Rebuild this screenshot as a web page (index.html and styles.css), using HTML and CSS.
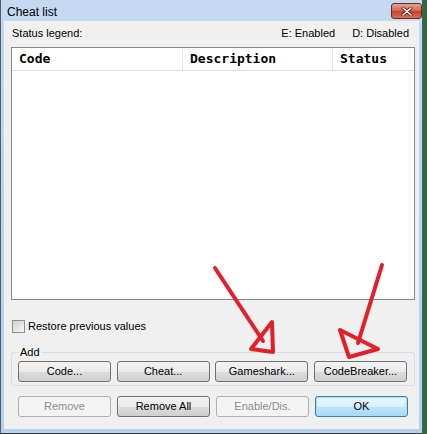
FILE: index.html
```html
<html>
	<head>
		<link rel="stylesheet" href="styles.css">
	</head>
	<body>
		<div id="window">
			<div id="titlebar">
				<span id="title">Cheat list</span>
				<div id="btnClose">
					<svg width="14" height="9" viewBox="0 0 14 9">
						<path d="M3 1 L11 8 M11 1 L3 8" stroke="#5a1a10" stroke-width="3" stroke-linecap="round"/>
						<path d="M3 1 L11 8 M11 1 L3 8" stroke="#ffffff" stroke-width="1.6" stroke-linecap="round"/>
					</svg>
				</div>
			</div>
			<div id="client">
				<div id="legend">
					<span>Status legend:</span>
					<span class="legendRight"><span>E: Enabled</span><span>D: Disabled</span></span>
				</div>
				<div id="cheatList">
					<div class="listHead">
						<div class="col colCode">Code</div>
						<div class="col colDesc">Description</div>
						<div class="col colStatus">Status</div>
					</div>
				</div>
				<div id="restoreRow">
					<span class="checkbox"></span>
					<span>Restore previous values</span>
				</div>
				<fieldset id="addGroup">
					<legend>Add</legend>
					<div class="btnRow">
						<div class="btn">Code...</div>
						<div class="btn">Cheat...</div>
						<div class="btn">Gameshark...</div>
						<div class="btn">CodeBreaker...</div>
					</div>
				</fieldset>
				<div class="btnRow bottomRow">
					<div class="btn disabled">Remove</div>
					<div class="btn">Remove All</div>
					<div class="btn disabled">Enable/Dis.</div>
					<div class="btn default">OK</div>
				</div>
			</div>
		</div>
		<svg id="arrows" width="427" height="434" viewBox="0 0 427 434">
			<g fill="none" stroke="#e41e2a" stroke-width="4" stroke-linecap="round" stroke-linejoin="round">
				<path d="M215 268 L263 341"/>
				<path d="M272 322 L251 349 L273 352 Z"/>
				<path d="M382 265 L358 343"/>
				<path d="M340 330 L349 357 L378 349 Z"/>
			</g>
		</svg>
	</body>
</html>
```

FILE: styles.css
```css
body{
	margin:0;
	background:#2c6a3a;
	font-family:"Liberation Sans", Arial, sans-serif;
	font-size:11px;
	color:#000;
	position:relative;
	width:427px;
	height:434px;
	overflow:hidden;
}

#window{
	width:423px;
	height:434px;
	box-sizing:border-box;
	display:flex;
	flex-direction:column;
	background:linear-gradient(#c3daf1, #b7cfe9);
	border-left:1px solid #4d5d6e;
	border-right:1px solid #4d5d6e;
	border-bottom:1px solid #333d48;
}

#titlebar{
	height:21px;
	display:flex;
	align-items:center;
	justify-content:space-between;
	padding-left:6px;
}

#title{
	font-size:12px;
	line-height:14px;
	margin-top:2px;
}

#btnClose{
	width:29px;
	height:14px;
	margin-top:1px;
	border:1px solid #6b2b22;
	border-radius:3px;
	background:linear-gradient(#e8a493, #d7644c 50%, #c6402a 51%, #d77059);
	display:flex;
	align-items:center;
	justify-content:center;
}

#client{
	flex:1;
	margin:0 3px 4px 3px;
	padding:0 4px 0 7px;
	background:#f0f0f0;
	display:flex;
	flex-direction:column;
}

#legend{
	height:26px;
	box-sizing:border-box;
	padding:6px 6px 0 1px;
	line-height:13px;
	display:flex;
	justify-content:space-between;
}

.legendRight{
	display:flex;
	gap:17px;
}

#cheatList{
	height:253px;
	box-sizing:border-box;
	border:1px solid #828790;
	background:#fff;
}

.listHead{
	display:flex;
	height:22px;
	border-bottom:1px solid #dfdfdf;
	font-family:"DejaVu Sans Mono", monospace;
	font-weight:bold;
	font-size:13px;
	line-height:22px;
}

.col{
	padding-left:7px;
	box-sizing:border-box;
}

.colCode{
	width:171px;
	border-right:1px solid #e5e5e5;
}

.colDesc{
	width:150px;
	border-right:1px solid #e5e5e5;
}

.colStatus{
	flex:1;
}

#restoreRow{
	margin-top:20px;
	height:13px;
	line-height:13px;
	display:flex;
	gap:3px;
	padding-left:1px;
}

.checkbox{
	width:11px;
	height:11px;
	border:1px solid #8f8f8f;
	background:linear-gradient(135deg, #d0d0d0, #f6f6f6);
}

#addGroup{
	margin:13px 0 0 0;
	padding:2px 7px 3px 6px;
	border:1px solid #d5dfe5;
	border-radius:3px;
	min-width:0;
}

#addGroup legend{
	padding:0 2px;
	margin-left:0;
	line-height:13px;
	font-size:11px;
}

.btnRow{
	display:flex;
	justify-content:space-between;
}

.bottomRow{
	margin:10px 7px 0 7px;
}

.btn{
	width:93px;
	height:21px;
	box-sizing:border-box;
	border:1px solid #707070;
	border-radius:3px;
	background:linear-gradient(#f2f2f2, #ebebeb 50%, #dddddd 51%, #cfcfcf);
	text-align:center;
	line-height:19px;
}

.btn.disabled{
	border-color:#adb2b5;
	background:#f4f4f4;
	color:#8d8d8d;
}

.btn.default{
	border-color:#3c7fb1;
	box-shadow:inset 0 0 0 1px #a6dcf6;
	background:linear-gradient(#eaf6fd, #d9f0fc 50%, #bee6fd 51%, #a7d9f5);
}

#arrows{
	position:absolute;
	left:0;
	top:0;
	pointer-events:none;
}
```
